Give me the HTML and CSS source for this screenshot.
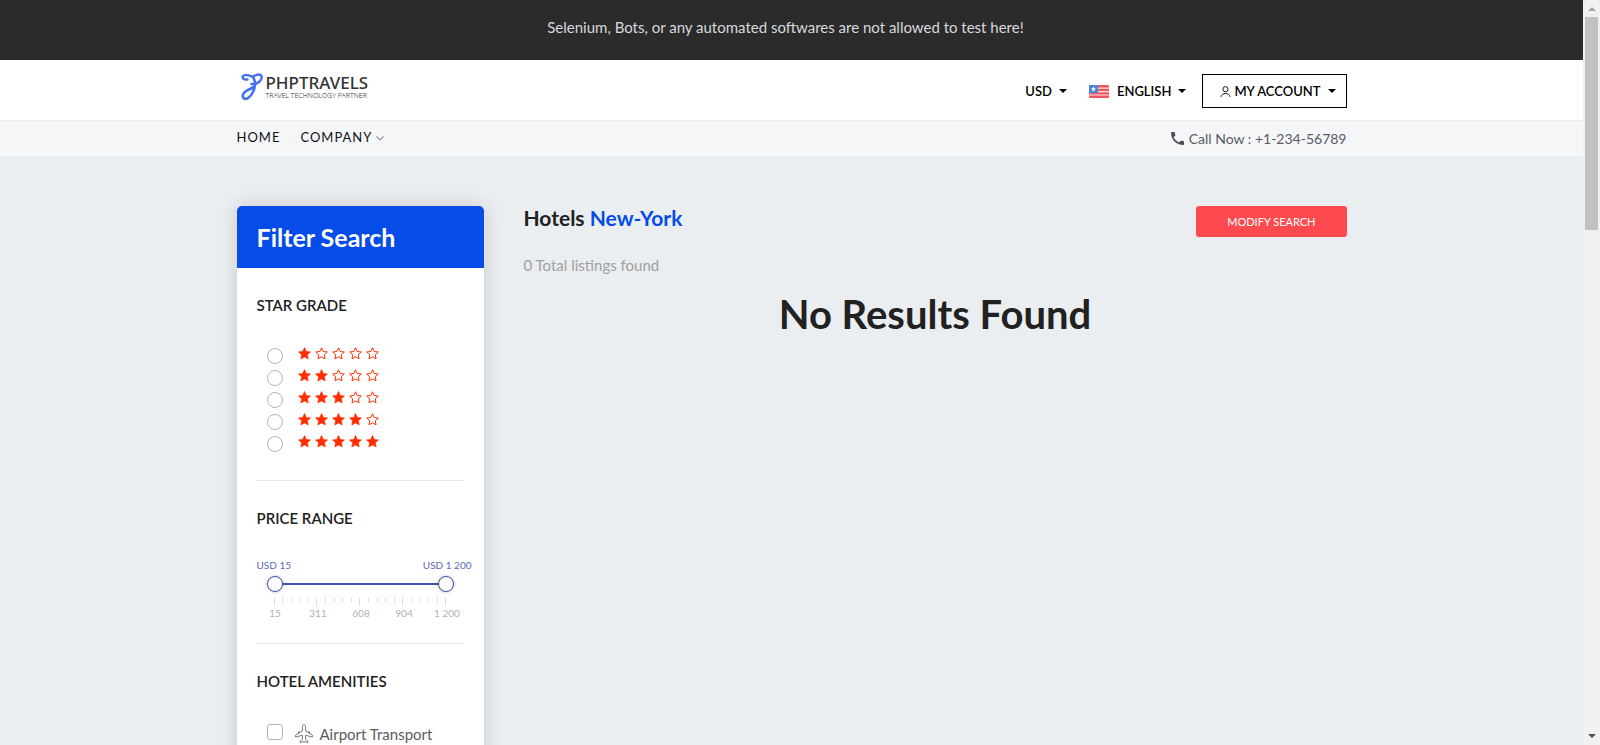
FILE: index.html
```html
<!DOCTYPE html>
<html lang="en">
<head>
<meta charset="utf-8">
<meta name="viewport" content="width=device-width, initial-scale=1">
<title>Hotels New-York</title>
<link rel="stylesheet" href="styles.css">
</head>
<body>
<svg class="symbols" aria-hidden="true">
  <symbol id="star" viewBox="0 0 13 13"><path d="M6.5 .5 8.3 4.4 12.5 4.9 9.4 7.8 10.2 12 6.5 9.9 2.8 12 3.6 7.8 .5 4.9 4.7 4.4Z" fill="#ff2d00" stroke="#ff2d00" stroke-width=".6" stroke-linejoin="round"/></symbol>
  <symbol id="star-o" viewBox="0 0 13 13"><path d="M6.5 .8 8.2 4.5 12.3 5 9.300 7.800 10 11.800 6.5 9.800 3 11.800 3.700 7.800 .7 5 4.8 4.5Z" fill="none" stroke="#ff2d00" stroke-width="1" stroke-linejoin="round"/></symbol>
</svg>
<div class="page">
  <div class="notice">Selenium, Bots, or any automated softwares are not allowed to test here!</div>
  <header class="header">
    <div class="container header-row">
      <a class="logo" href="#">
        <svg width="22" height="28" viewBox="0 0 22 28" fill="none" stroke="#4470f0" stroke-linecap="round" stroke-linejoin="round"><path d="M6.500 6.500C3 7 1.300 5.500 1.600 3.800C2 1.500 7 1.800 10.500 3.300C13 4.200 15 1.200 18 1.500C21.800 2 21.300 6 18.500 8.500C16 10.700 13 11.500 10.500 11" stroke-width="2.400"/><path d="M12.500 5C14.500 8 14.500 14 12 19C9.500 24 5 27.500 2.500 25C.5 22.500 3 18.500 7 17C9 16.200 11 15.500 13 13.500" stroke-width="2.600"/></svg>
        <span class="logo-text"><span class="logo-name">PHPTRAVELS</span><span class="logo-sub">TRAVEL TECHNOLOGY PARTNER</span></span>
      </a>
      <div class="tools">
        <button class="tool">USD<span class="caret"></span></button>
        <button class="tool language"><svg class="flag" width="20" height="13" viewBox="0 0 20 13"><rect width="20" height="13" rx="1" fill="#f0555f"/><path d="M0 3.200H20M0 6.600H20M0 10H20" stroke="#fff" stroke-width="1.200" stroke-opacity=".85"/><path d="M0 1Q0 0 1 0H9V8H0Z" fill="#4a88dc"/><path d="M4.500 1.600 5.200 3.300 7 3.400 5.600 4.600 6 6.300 4.500 5.400 3 6.300 3.400 4.600 2 3.400 3.800 3.300Z" fill="#fff"/></svg>ENGLISH<span class="caret"></span></button>
        <button class="tool account"><svg width="11" height="11" viewBox="0 0 11 11" fill="none" stroke="#111" stroke-width="1"><circle cx="5.500" cy="3.200" r="2.600"/><path d="M1 10.800C1.200 6.500 9.800 6.500 10 10.800"/></svg>MY ACCOUNT<span class="caret"></span></button>
      </div>
    </div>
  </header>
  <nav class="nav">
    <div class="container nav-row">
      <div class="links">
        <a href="#">HOME</a>
        <a href="#">COMPANY<svg width="8" height="5" viewBox="0 0 8 5" fill="none" stroke="#999" stroke-width="1.200"><path d="M.5 .5 4 4 7.500 .5"/></svg></a>
      </div>
      <a class="phone" href="tel:+1-234-56789"><svg width="13" height="13" viewBox="0 0 13 13"><path d="M0 .7Q0 0 .7 0H3.200Q3.800 0 3.900 .7Q4 1.900 4.300 2.800Q4.500 3.300 4.100 3.700L2.600 5.200Q4.200 8.700 7.800 10.400L9.300 8.900Q9.700 8.500 10.200 8.700Q11.200 9 12.300 9.100Q13 9.200 13 9.800V12.300Q13 13 12.300 13C5.500 13 0 7.500 0 .7Z" fill="#4f4f5c"/></svg>Call Now : +1-234-56789</a>
    </div>
  </nav>
  <main class="container content">
    <aside class="filters">
      <h3 class="filters-title">Filter Search</h3>
      <form class="filters-body">
        <section class="group">
          <h5>STAR GRADE</h5>
          <label class="option"><input type="radio" name="stars" aria-label="1 star"><span class="stars"><svg><use href="#star"/></svg><svg><use href="#star-o"/></svg><svg><use href="#star-o"/></svg><svg><use href="#star-o"/></svg><svg><use href="#star-o"/></svg></span></label>
          <label class="option"><input type="radio" name="stars" aria-label="2 stars"><span class="stars"><svg><use href="#star"/></svg><svg><use href="#star"/></svg><svg><use href="#star-o"/></svg><svg><use href="#star-o"/></svg><svg><use href="#star-o"/></svg></span></label>
          <label class="option"><input type="radio" name="stars" aria-label="3 stars"><span class="stars"><svg><use href="#star"/></svg><svg><use href="#star"/></svg><svg><use href="#star"/></svg><svg><use href="#star-o"/></svg><svg><use href="#star-o"/></svg></span></label>
          <label class="option"><input type="radio" name="stars" aria-label="4 stars"><span class="stars"><svg><use href="#star"/></svg><svg><use href="#star"/></svg><svg><use href="#star"/></svg><svg><use href="#star"/></svg><svg><use href="#star-o"/></svg></span></label>
          <label class="option"><input type="radio" name="stars" aria-label="5 stars"><span class="stars"><svg><use href="#star"/></svg><svg><use href="#star"/></svg><svg><use href="#star"/></svg><svg><use href="#star"/></svg><svg><use href="#star"/></svg></span></label>
        </section>
        <section class="group price">
          <h5>PRICE RANGE</h5>
          <div class="price-values"><label for="low">USD 15</label><label for="high">USD 1 200</label></div>
          <div class="range">
            <input id="low" type="range" min="15" max="1200" value="15">
            <input id="high" type="range" min="15" max="1200" value="1200">
          </div>
          <div class="ticks">
            <i class="major"></i><i></i><i></i><i></i><i></i><i class="major"></i><i></i><i></i><i></i><i></i><i class="major"></i><i></i><i></i><i></i><i></i><i class="major"></i><i></i><i></i><i></i><i></i><i class="major"></i>
          </div>
          <div class="scale"><span>15</span><span>311</span><span>608</span><span>904</span><span>1 200</span></div>
        </section>
        <section class="group">
          <h5>HOTEL AMENITIES</h5>
          <label class="option amenity"><input type="checkbox"><svg width="18" height="19" viewBox="0 0 18 19" fill="none" stroke="#777" stroke-width="1" stroke-linejoin="round"><path d="M9 .6C8 .6 7.400 2 7.400 3.300V6.800L.6 11.200V13L7.400 11.300V15.300L5.300 17V18.400L9 17.600 12.700 18.400V17L10.600 15.300V11.300L17.400 13V11.200L10.600 6.800V3.300C10.600 2 10 .6 9 .6ZM3.500 9.300V7.800H4.700V8.500M14.500 9.300V7.800H13.300V8.500"/></svg><span>Airport Transport</span></label>
        </section>
      </form>
    </aside>
    <section class="results">
      <div class="results-head">
        <h1>Hotels <span>New-York</span></h1>
        <button class="modify">MODIFY SEARCH</button>
      </div>
      <p class="count">0 Total listings found</p>
      <h2>No Results Found</h2>
    </section>
  </main>
</div>
<div class="scrollbar" aria-hidden="true"><i class="up"></i><i class="thumb"></i><i class="down"></i></div>
</body>
</html>
```
FILE: styles.css
```css
* { box-sizing: border-box; }
body {
  margin: 0;
  display: flex;
  height: 100vh;
  overflow: hidden;
  background: #eaeef1;
  color: #212121;
  font-family: Lato, "Open Sans", sans-serif;
  font-size: 15px;
  line-height: 24px;
}
h1, h2, h3, h5, p { margin: 0; }
a { color: inherit; text-decoration: none; }
button { font: inherit; color: inherit; background: none; border: 0; padding: 0; }
svg { flex: none; }
.symbols { position: absolute; width: 0; height: 0; }
.page { flex: 1; min-width: 0; overflow: hidden; }
.container { max-width: 1140px; margin: 0 auto; padding: 0 15px; }

.notice { padding: 15px 32px 21px 20px; background: #2b2b2b; color: #d8d8de; text-align: center; }

.header { background: #fff; border-bottom: 1px solid #e9ebed; }
.header-row { display: flex; justify-content: space-between; align-items: center; height: 60px; }
.logo { display: flex; align-items: center; gap: 3px; padding: 0 0 6px 4px; }
.logo-text { display: flex; flex-direction: column; font-family: "Noto Sans", sans-serif; color: #333; }
.logo-name { font-size: 17px; line-height: 16px; font-weight: 500; }
.logo-sub { font-size: 7px; line-height: 9px; font-weight: 300; }
.tools { display: flex; align-items: center; padding-top: 2px; color: #000; font-size: 13px; font-weight: 600; }
.tool { display: flex; align-items: center; }
.caret { margin-left: 7px; border: 4px solid transparent; border-top-color: #000; border-bottom: 0; }
.language { margin: 0 16px 0 22px; }
.flag { margin-right: 8px; }
.account { height: 34px; padding: 0 10px 0 17px; border: 1px solid #000; }
.account svg { margin-right: 3px; }

.nav { background: #f4f6f8; }
.nav-row { display: flex; justify-content: space-between; align-items: center; height: 35px; }
.links { display: flex; gap: 20px; padding-bottom: 3px; font-size: 13px; letter-spacing: 1px; color: #111; }
.links svg { margin-left: 4px; vertical-align: middle; }
.phone { display: flex; align-items: center; gap: 5px; font-size: 14px; color: #5b5b68; }

.content { display: flex; align-items: flex-start; gap: 40px; padding-top: 50px; }
.filters { flex: 0 0 247px; background: #fff; border-radius: 5px; box-shadow: 0 0 20px rgba(0, 0, 0, .15); padding-bottom: 40px; }
.filters-title { padding: 16px 20px; background: #054ce8; color: #fff; border-radius: 5px 5px 0 0; font-size: 25px; line-height: 30px; }
.filters-body { padding: 0 20px; }
.group { padding: 25px 0 25px; border-bottom: 1px solid #e6e6e6; }
.group h5 { margin-bottom: 28px; font-size: 15px; font-weight: 600; }
.option { display: flex; align-items: center; height: 22px; padding-left: 10px; }
.option input { appearance: none; width: 16px; height: 16px; margin: 0; border: 1px solid #adb5bd; background: #fff; border-radius: 3px; }
.option input[type="radio"] { border-radius: 50%; }
.stars { display: flex; gap: 4px; margin: 0 0 5px 15px; }
.stars svg { width: 13px; height: 13px; }
.amenity { color: #5b5b5b; }
.amenity svg { margin: 2px 7px 0 12px; }
.amenity span { padding-top: 4px; }

.price { padding-bottom: 23px; }
.price-values { display: flex; justify-content: space-between; margin-right: -8px; font-size: 10px; line-height: 14px; color: #5b68bd; }
.range { display: grid; margin: 4px 10px 6px; background: linear-gradient(#3f51b5, #3f51b5) center / 100% 2px no-repeat; }
.range input { grid-area: 1 / 1; appearance: none; width: 100%; height: 16px; margin: 0; background: none; pointer-events: none; }
.range input::-webkit-slider-thumb { appearance: none; width: 16px; height: 16px; border: 1px solid #3f51b5; border-radius: 50%; background: #fff; box-shadow: 0 0 3px rgba(0, 0, 0, .3); pointer-events: auto; }
.ticks { display: flex; justify-content: space-between; height: 8px; margin: 0 17px; }
.ticks i { width: 1px; height: 4px; background: #ddd; }
.ticks .major { height: 8px; }
.scale { display: flex; justify-content: space-between; margin: 1px -5px 1px -3px; font-size: 10px; line-height: 12px; color: #b0b0b0; }
.scale span { width: 43px; text-align: center; }

.results { flex: 1; min-width: 0; }
.results-head { display: flex; justify-content: space-between; align-items: flex-start; }
.results h1 { font-size: 21px; font-weight: 700; }
.results h1 span { color: #054ce8; }
.modify { padding: 0 31px; background: #fc4a4f; color: #fff; border-radius: 3px; font-size: 11px; line-height: 31px; }
.count { margin-top: 16px; color: #a0a0a0; }
.results h2 { margin-top: 13px; text-align: center; font-size: 40px; line-height: 48px; font-weight: 700; }

.scrollbar { flex: none; display: flex; flex-direction: column; align-items: center; width: 17px; padding: 7px 0; background: #f1f1f1; }
.scrollbar .up { border: 4px solid transparent; border-top: 0; border-bottom-color: #a3a3a3; }
.scrollbar .thumb { width: 13px; height: 213px; margin: 6px 0 auto; background: #c1c1c1; }
.scrollbar .down { border: 4px solid transparent; border-bottom: 0; border-top-color: #505050; }
```
